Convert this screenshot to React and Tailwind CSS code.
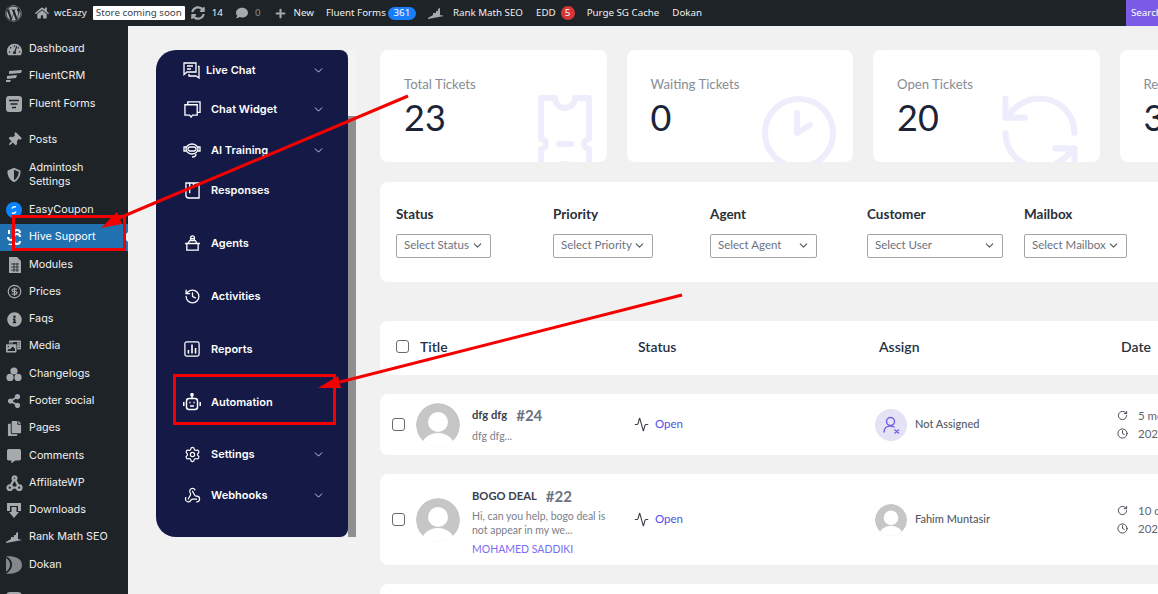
import {
  FaWordpress, FaHome, FaSyncAlt, FaComment, FaPlus, FaTachometerAlt, FaThumbtack, FaShieldAlt,
  FaInfoCircle, FaPhotoVideo, FaShareAlt, FaCopy, FaCommentAlt,
} from "react-icons/fa";
import { Settings, Webhook, History, ChevronDown, Activity, RotateCw, Clock, CircleDollarSign, RefreshCcw } from "lucide-react";

const barFont = "font-['Noto_Sans',sans-serif]";
const sideFont = "font-['Inter',sans-serif]";

function RankBars({ className }) {
  return (
    <svg viewBox="0 0 16 12" className={className} fill="currentColor">
      <path d="M0 11 L5 8 V6 H8 V4 H10 V2 L12 1 V8 L16 9 L0 12 Z" />
    </svg>
  );
}

function CrmIcon() {
  return (
    <svg viewBox="0 0 16 12" className="w-4 h-3 text-[#a7aaad]" fill="currentColor">
      <path d="M3 1 L16 0 L15 3 L3 4 Z M1 6 L11 5 L10 8 L1 9 Z M0 10 L5 10 L4 12 L0 12 Z" />
    </svg>
  );
}

function FormsIcon() {
  return (
    <svg viewBox="0 0 16 16" className="w-4 h-4">
      <rect width="16" height="16" rx="3" fill="#a7aaad" />
      <path d="M3 4.5 H13 M4.5 8 H11.5 M6 11.5 H10" stroke="#1d2327" strokeWidth="1.6" />
    </svg>
  );
}

function CouponIcon() {
  return (
    <svg viewBox="0 0 16 16" className="w-4 h-4">
      <circle cx="8" cy="8" r="8" fill="#0a84ff" />
      <path d="M10 5 A3 3 0 0 0 6 6.5 M6 11 A3 3 0 0 0 10 9.5" stroke="#fff" strokeWidth="1.5" fill="none" />
    </svg>
  );
}

function HiveIcon() {
  return (
    <svg viewBox="0 0 16 16" className="w-4 h-4" fill="none" stroke="#fff" strokeWidth="2">
      <path d="M3 1 V5 M2 8 A3 3 0 0 0 8 8 A3 3 0 0 1 14 8 M3 15 A3 3 0 0 0 8 12 M8 4 A3 3 0 0 1 14 4 M14 12 A3 3 0 0 1 8 12" />
    </svg>
  );
}

function SheetIcon() {
  return (
    <svg viewBox="0 0 14 16" className="w-[14px] h-4 ml-[2px]">
      <path d="M1 0 H9 L13 4 V16 H1 Z" fill="#a7aaad" />
      <path d="M3 7 H11 M3 10 H11 M3 13 H11 M6 6 V15 M9 6 V15" stroke="#1d2327" strokeWidth="0.8" />
    </svg>
  );
}

function DotsIcon() {
  return (
    <svg viewBox="0 0 16 14" className="w-4 h-[14px]" fill="#a7aaad">
      <circle cx="8" cy="4" r="3.6" />
      <circle cx="4" cy="10.4" r="3.6" />
      <circle cx="12" cy="10.4" r="3.6" />
    </svg>
  );
}

function AffiliateIcon() {
  return (
    <svg viewBox="0 0 18 16" className="w-[17px] h-4" fill="none" stroke="#a7aaad" strokeWidth="2.4">
      <circle cx="9" cy="3" r="2" />
      <circle cx="4" cy="13" r="2.4" />
      <circle cx="14" cy="13" r="2.4" />
      <path d="M8 5 L5 11 M10 5 L13 11 M6 13 H12" />
    </svg>
  );
}

function DownloadIcon() {
  return (
    <svg viewBox="0 0 14 16" className="w-[14px] h-4 ml-[1px]" fill="#a7aaad">
      <path d="M0 1 H14 V9 H11 V4 H3 V9 H0 Z M4.5 5 H9.5 V10 H12 L7 16 L2 10 H4.5 Z" />
    </svg>
  );
}

function DokanIcon() {
  return (
    <svg viewBox="0 0 16 18" className="w-4 h-[18px]" fill="#a7aaad">
      <path d="M0 0 C10 0 16 3 16 9 C16 15 10 18 0 18 C6 14 10 6 0 0 Z M0 2 C5 5 6 11 0 16 Z" fillOpacity="0.75" />
    </svg>
  );
}

const gray = "text-[#a7aaad]";

const sideGroups = [
  { label: "Dashboard", icon: <FaTachometerAlt className={`${gray} text-[15px] ml-px`} /> },
  { label: "FluentCRM", icon: <CrmIcon /> },
  { label: "Fluent Forms", icon: <FormsIcon />, extra: "mb-[9px]" },
  { label: "Posts", icon: <FaThumbtack className={`${gray} text-[14px] rotate-45 ml-px`} /> },
  { label: "Admintosh Settings", icon: <FaShieldAlt className={`${gray} text-[14px] ml-px`} />, tall: true },
  { label: "EasyCoupon", icon: <CouponIcon /> },
  { label: "Hive Support", icon: <HiveIcon />, active: true },
  { label: "Modules", icon: <SheetIcon /> },
  { label: "Prices", icon: <CircleDollarSign className={`${gray} w-[15px] h-[15px] ml-px`} /> },
  { label: "Faqs", icon: <FaInfoCircle className={`${gray} text-[15px] ml-px`} /> },
  { label: "Media", icon: <FaPhotoVideo className={`${gray} text-[15px]`} /> },
  { label: "Changelogs", icon: <DotsIcon /> },
  { label: "Footer social", icon: <FaShareAlt className={`${gray} text-[14px] ml-px`} /> },
  { label: "Pages", icon: <FaCopy className={`${gray} text-[15px] ml-px`} /> },
  { label: "Comments", icon: <FaCommentAlt className={`${gray} text-[14px] ml-px`} /> },
  { label: "AffiliateWP", icon: <AffiliateIcon /> },
  { label: "Downloads", icon: <DownloadIcon /> },
  { label: "Rank Math SEO", icon: <RankBars className={`${gray} w-4 h-3`} /> },
  { label: "Dokan", icon: <DokanIcon /> },
];

function AdminBar() {
  return (
    <div className={`${barFont} h-[26px] shrink-0 bg-[#1d2327] flex items-center text-[9.75px] text-[#f0f0f1] whitespace-nowrap relative`}>
      <FaWordpress className="ml-[5px] text-[17px] text-[#a7aaad]" />
      <FaHome className="ml-[13px] text-[14px] text-[#a7aaad]" />
      <span className="ml-[5px]">wcEazy</span>
      <span className="ml-[6px] w-[92px] h-[14px] bg-white rounded-[1px] text-[#3c434a] flex items-center justify-center leading-none">Store coming soon</span>
      <FaSyncAlt className="ml-[6px] text-[14px] text-[#a7aaad]" />
      <span className="ml-[7px]">14</span>
      <FaComment className="ml-[13px] text-[12px] text-[#a7aaad]" />
      <span className="ml-[7px] text-[#8c8f94]">0</span>
      <FaPlus className="ml-[14px] text-[11px] text-[#a7aaad]" />
      <span className="ml-[8px]">New</span>
      <span className="ml-[12px]">Fluent Forms</span>
      <span className="ml-[2px] w-[28px] h-[13px] rounded-full bg-[#1a7efb] text-white flex items-center justify-center leading-none">361</span>
      <RankBars className="ml-[12px] w-4 h-3 text-[#a7aaad]" />
      <span className="ml-[9px]">Rank Math SEO</span>
      <span className="ml-[13px]">EDD</span>
      <span className="ml-[5px] w-[14px] h-[14px] rounded-full bg-[#d63638] text-white flex items-center justify-center leading-none">5</span>
      <span className="ml-[12px]">Purge SG Cache</span>
      <span className="ml-[13px]">Dokan</span>
      <div className="ml-auto w-[32px] h-full bg-[#7b5be6] pl-[5px] flex items-center overflow-hidden text-white">Search</div>
    </div>
  );
}

function Sidebar() {
  return (
    <aside className={`${sideFont} w-[128px] shrink-0 bg-[#1d2327] pt-[9.5px] text-[10.8px] text-[#f0f0f1] overflow-hidden`}>
      {sideGroups.map((item) => (
        <div
          key={item.label}
          className={`relative flex items-center pl-[6px] ${item.tall ? "h-[42.6px]" : "h-[27.3px]"} ${item.active ? "bg-[#2271b1] text-white" : ""} ${item.extra || ""}`}
        >
          <span className="w-[23px] shrink-0 flex items-center">{item.icon}</span>
          <span className="leading-[14px] max-w-[90px]">{item.label}</span>
          {item.active && (
            <span className="absolute right-0 top-[8px] border-y-[5px] border-r-[5px] border-y-transparent border-r-[#f1f1f1]" />
          )}
        </div>
      ))}
      <div className="ml-[6px] mt-[14px] w-4 h-4 rounded-sm bg-[#a7aaad]" />
    </aside>
  );
}

function LiveChatIcon() {
  return (
    <svg viewBox="0 0 17 17" className="w-[17px] h-[17px]" fill="none" stroke="#fff" strokeWidth="1.3">
      <path d="M1 1 H13 V10 H4 L1 12.5 Z" />
      <path d="M4 4 H10 M4 7 H8" />
      <path d="M15 4.5 H16 V16 L13 14 H6 V12" />
    </svg>
  );
}

function ChatWidgetIcon() {
  return (
    <svg viewBox="0 0 18 18" className="w-[17px] h-[17px]" fill="none" stroke="#fff" strokeWidth="1.4">
      <path d="M4 4 V1 H17 V12 H14" />
      <path d="M1 4 H14 V15 H9 L7.5 17 L6 15 H1 Z" />
    </svg>
  );
}

function RobotHeadIcon() {
  return (
    <svg viewBox="0 0 18 18" className="w-[18px] h-[18px]" fill="none" stroke="#fff" strokeWidth="1.3">
      <ellipse cx="9" cy="8" rx="6" ry="5" />
      <rect x="5" y="6" width="8" height="4" rx="2" />
      <path d="M3 6 H1 V10 H3 M15 6 H17 V10 H15 M13 13 C13 16 11 16 9 16" />
    </svg>
  );
}

function BookIcon() {
  return (
    <svg viewBox="0 0 16 18" className="w-[15px] h-[17px]" fill="none" stroke="#fff" strokeWidth="1.4">
      <path d="M1 1 H15 V17 H4 A3 3 0 0 1 1 14 Z M5 1 V12 M9 1 V6" />
    </svg>
  );
}

function AgentIcon() {
  return (
    <svg viewBox="0 0 18 18" className="w-[17px] h-[17px]" fill="none" stroke="#fff" strokeWidth="1.4">
      <path d="M7 6 V3 A2 2 0 0 1 11 3 V6 M4 9 L6 6 H12 L14 9 M1 9 H17 M3 9 V16 H15 V9 M7 4 H11" />
    </svg>
  );
}

function ReportIcon() {
  return (
    <svg viewBox="0 0 18 18" className="w-4 h-4" fill="none" stroke="#fff" strokeWidth="1.4">
      <rect x="1" y="1" width="16" height="16" rx="2" />
      <path d="M5 14 V10 M9 14 V4 M13 14 V8" strokeWidth="1.8" />
    </svg>
  );
}

function AutomationIcon() {
  return (
    <svg viewBox="0 0 18 18" className="w-[18px] h-[18px]" fill="none" stroke="#fff" strokeWidth="1.5">
      <circle cx="9" cy="1.8" r="1.1" fill="#fff" />
      <path d="M9 3 V5.5" />
      <rect x="3.5" y="5.5" width="11" height="11" rx="2.5" />
      <path d="M0.8 9 V13 M17.2 9 V13" />
      <path d="M6.5 9.5 H7.5 M10.5 9.5 H11.5" strokeWidth="2" />
      <path d="M7 13 H11" />
    </svg>
  );
}

const navItems = [
  { label: "Live Chat", icon: <LiveChatIcon />, chevron: true, top: "mt-0", text: "ml-[6px]", shift: "-ml-[1px]" },
  { label: "Chat Widget", icon: <ChatWidgetIcon />, chevron: true, top: "mt-[1px]" },
  { label: "AI Training", icon: <RobotHeadIcon />, chevron: true, top: "mt-[3px]" },
  { label: "Responses", icon: <BookIcon />, top: "mt-[2px]" },
  { label: "Agents", icon: <AgentIcon />, top: "mt-[15px]" },
  { label: "Activities", icon: <History className="w-[17px] h-[17px] text-white" strokeWidth={1.8} />, top: "mt-[15px]" },
  { label: "Reports", icon: <ReportIcon />, top: "mt-[15px]" },
  { label: "Automation", icon: <AutomationIcon />, top: "mt-[15px]" },
  { label: "Settings", icon: <Settings className="w-[17px] h-[17px] text-white" strokeWidth={1.7} />, chevron: true, top: "mt-[14px]" },
  { label: "Webhooks", icon: <Webhook className="w-[17px] h-[17px] text-white" strokeWidth={1.7} />, chevron: true, top: "mt-[3px]" },
];

function NavPanel() {
  return (
    <div className="flex shrink-0 h-[487px] ml-[28px] mt-[24px]">
      <nav className={`${sideFont} w-[192px] h-full bg-[#141a45] rounded-l-[20px] rounded-r-[8px] pl-[27px] pr-[23px] pt-px text-[11px] font-semibold text-white`}>
        {navItems.map((item) => (
          <div key={item.label} className={`h-[38px] flex items-center ${item.top}`}>
            <span className={`w-[18px] shrink-0 flex justify-center ${item.shift || ""}`}>{item.icon}</span>
            <span className={item.text || "ml-[10px]"}>{item.label}</span>
            {item.chevron && <ChevronDown className="ml-auto w-[13px] h-[13px] text-[#d5d6e0]" strokeWidth={1.7} />}
          </div>
        ))}
      </nav>
      <div className="w-2 h-full flex flex-col">
        <div className="h-[66px] bg-[#f4f4f4]" />
        <div className="flex-1 bg-[#8f8f8f]" />
      </div>
    </div>
  );
}

function TicketArt() {
  return (
    <svg viewBox="0 0 54 82" className="w-[54px] h-[82px]" fill="none" stroke="#eeedfb" strokeWidth="6">
      <path d="M3 3 H17 A10 10 0 0 0 37 3 H51 V44 A5 5 0 0 0 51 54 V79 H37 A10 10 0 0 0 17 79 H3 V54 A5 5 0 0 0 3 44 Z" strokeLinejoin="round" />
      <path d="M21 49 H33" strokeLinecap="round" />
    </svg>
  );
}

function ClockArt() {
  return (
    <svg viewBox="0 0 76 76" className="w-[76px] h-[76px]" fill="none" stroke="#eeedfb" strokeWidth="6" strokeLinecap="round">
      <circle cx="38" cy="38" r="34" />
      <path d="M36 18 V38 L49 30" strokeLinejoin="round" />
    </svg>
  );
}

const stats = [
  { label: "Total Tickets", value: "23", art: <TicketArt />, pos: "left-[158px] top-[45px]" },
  { label: "Waiting Tickets", value: "0", art: <ClockArt />, pos: "left-[134px] top-[45px]" },
  { label: "Open Tickets", value: "20", art: <RefreshCcw className="w-[92px] h-[92px] text-[#eeedfb]" strokeWidth={1.6} />, pos: "left-[121px] top-[37px]" },
  { label: "Resolved Tickets", value: "3", art: null, pos: "" },
];

function StatCard({ stat }) {
  return (
    <div className="relative w-[226.5px] h-[112px] shrink-0 rounded-[8px] bg-white overflow-hidden pl-[24px] pt-[25px]">
      <div className="text-[13.2px] leading-[18px] text-[#868c96]">{stat.label}</div>
      <div className="text-[36px] leading-[44px] mt-[2px] text-[#1b2437]">{stat.value}</div>
      {stat.art && <div className={`absolute ${stat.pos}`}>{stat.art}</div>}
    </div>
  );
}

const filters = [
  { label: "Status", text: "Select Status", width: "w-[95px]" },
  { label: "Priority", text: "Select Priority", width: "w-[100px]" },
  { label: "Agent", text: "Select Agent", width: "w-[107px]" },
  { label: "Customer", text: "Select User", width: "w-[136px]" },
  { label: "Mailbox", text: "Select Mailbox", width: "w-[103px]" },
];

function Filters() {
  return (
    <div className="mt-[20px] h-[100px] rounded-[8px] bg-white pl-[16px] pt-[24px] grid grid-cols-[repeat(5,157px)]">
      {filters.map((f) => (
        <div key={f.label}>
          <div className="text-[13.5px] leading-[16px] font-bold text-[#2b2f36]">{f.label}</div>
          <div className={`${f.width} mt-[12px] h-[24px] border border-[#a5a5a5] rounded-[2px] pl-[7px] pr-[6px] pb-[2px] flex items-center justify-between text-[11.5px] text-[#6b7280]`}>
            <span className="whitespace-nowrap">{f.text}</span>
            <ChevronDown className="w-[13px] h-[13px] shrink-0 text-[#50575e]" strokeWidth={2} />
          </div>
        </div>
      ))}
    </div>
  );
}

function Avatar({ size }) {
  return (
    <svg viewBox="0 0 44 44" className={`${size} shrink-0 rounded-full`}>
      <circle cx="22" cy="22" r="22" fill="#c6c6c6" />
      <circle cx="22" cy="19" r="10" fill="#fff" />
      <ellipse cx="22" cy="43" rx="16" ry="13" fill="#fff" />
    </svg>
  );
}

function NotAssigned() {
  return (
    <span className="w-[32px] h-[32px] shrink-0 rounded-full bg-[#e4e2f5] flex items-center justify-center">
      <svg viewBox="0 0 18 18" className="w-[18px] h-[18px]" fill="none" stroke="#6c63e8" strokeWidth="1.5" strokeLinecap="round">
        <circle cx="8.5" cy="5.5" r="4" />
        <path d="M2 16 C2 12 5 10 8.5 10 C10 10 11 10.3 12 11" />
        <path d="M13 14 L16.5 17 M16.5 14 L13 17" />
      </svg>
    </span>
  );
}

function TicketRow({ row }) {
  return (
    <div className={`grid grid-cols-[254px_241px_242px_200px] ${row.height} mt-[19px] rounded-[8px] bg-white items-center overflow-hidden`}>
      <div className="flex items-center pl-[12px]">
        <span className="w-[13px] h-[13px] shrink-0 rounded-[3px] border border-[#6b6b6b]" />
        <span className="ml-[11px]"><Avatar size="w-[44px] h-[44px]" /></span>
        <div className={`ml-[12px] min-w-0 ${row.pad}`}>
          <div className="flex items-center h-[18px]">
            <span className="text-[11.2px] font-bold text-[#3a404c]">{row.title}</span>
            <span className="ml-[9px] text-[15px] font-bold text-[#6b7280]">{row.id}</span>
          </div>
          <div className={`${row.bodyTop} text-[10.5px] leading-[14px] text-[#7b8089] w-[140px]`}>{row.body}</div>
          {row.author && <div className="mt-[5px] text-[10.5px] leading-[14px] text-[#7b6cf6] whitespace-nowrap">{row.author}</div>}
        </div>
      </div>
      <div className="flex items-center pb-px">
        <Activity className="w-[15px] h-[15px] text-[#3a404c]" strokeWidth={1.8} />
        <span className="ml-[6px] text-[11.5px] text-[#4f4fe8]">Open</span>
      </div>
      <div className="flex items-center">
        {row.assignee ? <Avatar size="w-[32px] h-[32px]" /> : <NotAssigned />}
        <span className="ml-[8px] text-[11px] font-medium text-[#555a63]">{row.assignee || "Not Assigned"}</span>
      </div>
      <div className="text-[11.5px] leading-[18px] text-[#5f6670]">
        <div className="flex items-center gap-[10px]"><RotateCw className="w-[11px] h-[11px] text-[#3a404c]" />{row.age}</div>
        <div className="flex items-center gap-[10px]"><Clock className="w-[11px] h-[11px] text-[#3a404c]" />{row.date}</div>
      </div>
    </div>
  );
}

const rows = [
  { title: "dfg dfg", id: "#24", body: "dfg dfg...", age: "5 months ago", date: "2024-01-10", height: "h-[61px]", bodyTop: "mt-[5px]", pad: "pt-0" },
  {
    title: "BOGO DEAL",
    id: "#22",
    body: "Hi, can you help, bogo deal is not appear in my we...",
    author: "MOHAMED SADDIKI",
    assignee: "Fahim Muntasir",
    age: "10 days ago",
    date: "2024-01-02",
    height: "h-[91px]",
    bodyTop: "mt-[3px]",
    pad: "pt-[4px]",
  },
];

function Annotations() {
  return (
    <svg className="absolute inset-0 w-[1158px] h-[594px] pointer-events-none" viewBox="0 0 1158 594" fill="none">
      <path d="M408 96 L112 221" stroke="#f50000" strokeWidth="3" />
      <path d="M101 228 L117 212 L122 224 Z" fill="#f50000" />
      <rect x="13.5" y="216.5" width="111" height="33" stroke="#f50000" strokeWidth="3" />
      <path d="M682 295 L340 382" stroke="#f50000" strokeWidth="3" />
      <path d="M318 388 L338 376 L341 388 Z" fill="#f50000" />
      <rect x="174.5" y="375.5" width="160" height="48" stroke="#f50000" strokeWidth="3" />
    </svg>
  );
}

export default function App() {
  return (
    <div className="relative w-[1158px] h-[594px] overflow-hidden flex flex-col bg-[#f1f1f1] font-['Lato',sans-serif]">
      <AdminBar />
      <div className="flex flex-1 min-h-0">
        <Sidebar />
        <NavPanel />
        <main className="ml-[24px] mt-[24px] w-[1000px] shrink-0">
          <div className="flex gap-[20px]">
            {stats.map((s) => (
              <StatCard key={s.label} stat={s} />
            ))}
          </div>
          <Filters />
          <div className="grid grid-cols-[242px_241px_242px_200px] h-[54px] mt-[39px] rounded-[8px] bg-white items-center text-[14px] font-semibold text-[#27303f] pl-[16px] pb-[3px]">
            <div className="flex items-center">
              <span className="w-[13px] h-[13px] rounded-[3px] border border-[#6b6b6b]" />
              <span className="ml-[11px]">Title</span>
            </div>
            <div>Status</div>
            <div>Assign</div>
            <div>Date</div>
          </div>
          {rows.map((r) => (
            <TicketRow key={r.id} row={r} />
          ))}
          <div className="mt-[19px] h-[60px] rounded-[8px] bg-white" />
        </main>
      </div>
      <Annotations />
    </div>
  );
}
